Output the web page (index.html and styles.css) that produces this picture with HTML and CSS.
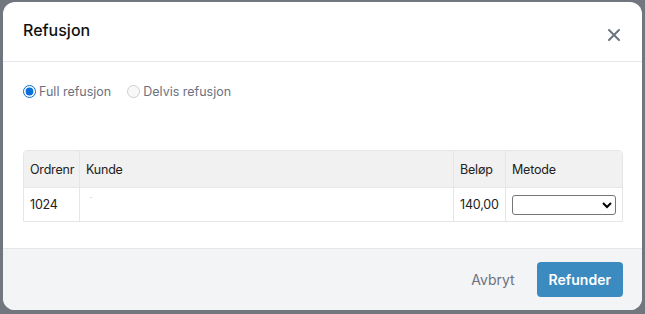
FILE: index.html
```html
<!DOCTYPE html>
<html lang="no">

<head>
  <meta charset="UTF-8">
  <meta name="viewport" content="width=device-width, initial-scale=1.0">
  <link rel="stylesheet" href="styles.css">
  <title>Refusjon</title>
</head>

<body>
  <div class="modal">
    <div class="modal-header">
      <h2 class="modal-title">Refusjon</h2>
      <button class="close-button" aria-label="Lukk">
        <svg width="14" height="14" viewBox="0 0 14 14">
          <path d="M2 2 L12 12 M12 2 L2 12" stroke="#6b7280" stroke-width="2" stroke-linecap="round" fill="none" />
        </svg>
      </button>
    </div>

    <div class="modal-body">
      <div class="radio-row">
        <label class="radio-option">
          <input type="radio" name="type" checked>
          <span>Full refusjon</span>
        </label>
        <label class="radio-option">
          <input type="radio" name="type" disabled>
          <span>Delvis refusjon</span>
        </label>
      </div>

      <table class="order-table">
        <thead>
          <tr>
            <th class="col-order">Ordrenr</th>
            <th class="col-customer">Kunde</th>
            <th class="col-amount">Beløp</th>
            <th class="col-method">Metode</th>
          </tr>
        </thead>
        <tbody>
          <tr>
            <td>1024</td>
            <td><span class="faint">-</span></td>
            <td>140,00</td>
            <td>
              <select class="method-select">
                <option></option>
              </select>
            </td>
          </tr>
        </tbody>
      </table>
    </div>

    <div class="modal-footer">
      <button class="cancel-button">Avbryt</button>
      <button class="refund-button">Refunder</button>
    </div>
  </div>
</body>

</html>
```

FILE: styles.css
```css
body {
  margin: 0;
  height: 314px;
  overflow: hidden;
  background-color: #72767f;
  font-family: Inter, "Noto Sans", sans-serif;
}

.modal {
  margin: 2px 3px 0 3px;
  width: 639px;
  height: 308px;
  background-color: #fff;
  border-radius: 12px;
  overflow: hidden;
  display: flex;
  flex-direction: column;
}

.modal-header {
  height: 59px;
  padding: 0 20px;
  display: flex;
  align-items: center;
  justify-content: space-between;
  border-bottom: 1px solid #e5e7eb;
}

.modal-title {
  margin: 0;
  font-size: 16px;
  font-weight: 500;
  color: #111;
  margin-top: -3px;
}

.close-button {
  border: none;
  background: none;
  padding: 0;
  width: 14px;
  height: 14px;
  margin-right: 1px;
  margin-top: 6px;
  cursor: pointer;
}

.modal-body {
  flex: 1;
  padding: 21px 19px 0 20px;
}

.radio-row {
  display: flex;
  gap: 16px;
  height: 16px;
  align-items: center;
}

.radio-option {
  display: flex;
  align-items: center;
  gap: 3px;
  font-size: 12.5px;
  color: #6b7280;
}

.radio-option input {
  margin: 0;
  width: 13px;
  height: 13px;
  accent-color: #0a6fd8;
}

.order-table {
  margin-top: 51px;
  width: 600px;
  border-collapse: separate;
  border-spacing: 0;
  font-size: 12.5px;
  letter-spacing: -0.2px;
  color: #222;
  border: 1px solid #e6e6e6;
  border-radius: 4px 4px 0 0;
  table-layout: fixed;
}

.order-table th {
  height: 36px;
  background-color: #f1f1f1;
  font-weight: 400;
  text-align: left;
  padding: 0 6px;
}

.order-table td {
  height: 33px;
  padding: 0 6px;
  border-top: 1px solid #e6e6e6;
}

.order-table th + th,
.order-table td + td {
  border-left: 1px solid #e6e6e6;
}

.order-table th:first-child {
  border-top-left-radius: 4px;
}

.order-table th:last-child {
  border-top-right-radius: 4px;
}

.col-order {
  width: 43px;
}

.col-amount {
  width: 39px;
}

.col-method {
  width: 104px;
}

.faint {
  color: #ddd;
  font-size: 9px;
  vertical-align: top;
  position: relative;
  top: -6px;
  left: 3px;
}

.method-select {
  width: 104px;
  height: 20px;
  border: 1px solid #767676;
  border-radius: 3px;
  background-color: #fff;
  font-size: 13px;
}

.modal-footer {
  height: 61px;
  background-color: #f3f4f6;
  border-top: 1px solid #e5e7eb;
  display: flex;
  align-items: center;
  justify-content: flex-end;
  padding: 0 19px 0 20px;
  gap: 22px;
}

.cancel-button {
  border: none;
  background: none;
  padding: 0;
  font-family: Inter, "Noto Sans", sans-serif;
  font-size: 14px;
  color: #6b7280;
  cursor: pointer;
}

.refund-button {
  border: none;
  height: 35px;
  padding: 0 12px;
  background-color: #3b8bc0;
  color: #fff;
  font-family: Inter, "Noto Sans", sans-serif;
  font-size: 14px;
  font-weight: 600;
  border-radius: 4px;
  cursor: pointer;
}
```
